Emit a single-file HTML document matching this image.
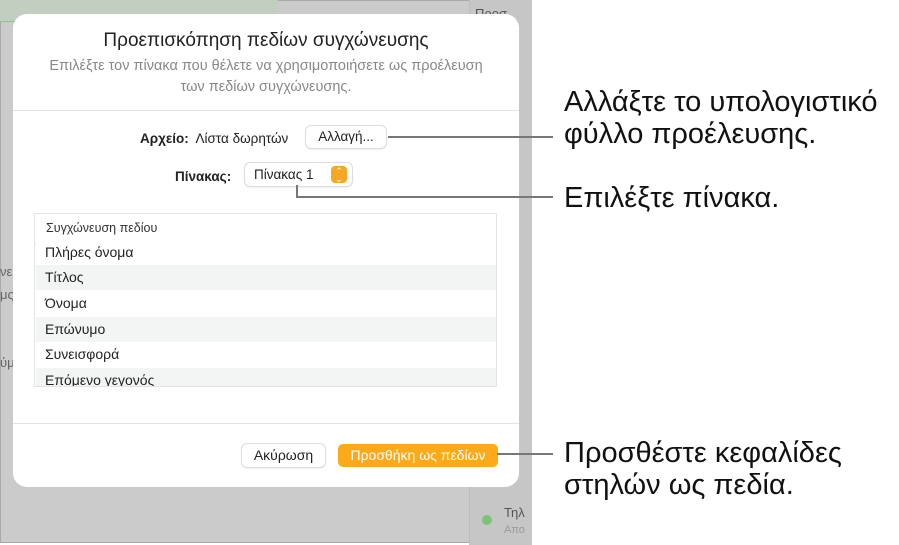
<!DOCTYPE html>
<html><head><meta charset="utf-8"><style>
body{margin:0;width:899px;height:545px;background:#fff;position:relative;overflow:hidden;font-family:"Liberation Sans",sans-serif}
.bg{position:absolute;left:0;top:0;width:530px;height:543px;background:#cbcbcb;border:1px solid #a9a9a9;box-sizing:border-box}
.side{position:absolute;left:469px;top:0;width:62px;height:545px;background:#c6c6c6;border-left:1px solid #bdbdbd}
.dlg{position:absolute;left:13px;top:14px;width:506px;height:473px;background:#fff;border-radius:14px}
.t{position:absolute;font-size:13px;color:#777}
.abs{position:absolute}
.row{position:absolute;left:1px;width:461px;height:25px;font-size:14px;color:#222;line-height:25px;padding-left:9px;box-sizing:border-box}
.line{position:absolute;background:#777;height:2px}
.cap{position:absolute;font-size:29px;color:#111;line-height:32px}
</style></head><body>
<div class="bg"></div>
<div class="abs" style="left:0;top:0;width:278px;height:21px;background:#c2cfc0;border-bottom:1px solid #8fc48a"></div>
<div class="side">
<div class="t" style="left:5px;top:6px;color:#555">Προσ</div>
<div class="t" style="left:5px;top:56px;color:#555">εδ</div>
<div class="t" style="left:5px;top:100px">ευ</div>
<div class="t" style="left:5px;top:168px;color:#999">ιρ</div>
<div class="t" style="left:5px;top:210px;color:#555">τλ</div>
<div class="t" style="left:5px;top:290px;color:#555">νο</div>
<div class="t" style="left:5px;top:345px;color:#555">νε</div>
<div class="t" style="left:5px;top:400px;color:#555">λή</div>
<div class="t" style="left:5px;top:453px;color:#555">πα</div>
<div class="abs" style="left:12px;top:515px;width:10px;height:10px;border-radius:50%;background:#7ac37a"></div>
<div class="t" style="left:34px;top:505px;color:#555">Τηλ</div>
<div class="t" style="left:34px;top:524px;font-size:11px;color:#999">Απο</div>
</div>
<div class="t" style="left:0;top:264px;color:#666">νε</div>
<div class="t" style="left:0;top:287px;color:#666">μς</div>
<div class="t" style="left:0;top:355px;color:#666">ύμ</div>
<div class="dlg">
<div class="abs" style="left:0;width:506px;top:16px;text-align:center;font-size:19px;color:#222">Προεπισκόπηση πεδίων συγχώνευσης</div>
<div class="abs" style="left:0;width:506px;top:42px;text-align:center;font-size:14.5px;color:#888;line-height:21px">Επιλέξτε τον πίνακα που θέλετε να χρησιμοποιήσετε ως προέλευση<br>των πεδίων συγχώνευσης.</div>
<div class="abs" style="left:0;top:96px;width:506px;height:1px;background:#e3e3e3"></div>
<div class="abs" style="left:127px;top:117px;font-size:13.5px;color:#222"><b>Αρχείο:</b>&nbsp; Λίστα δωρητών</div>
<div class="abs" style="left:293px;top:112px;width:80px;height:22px;border-radius:5px;box-shadow:0 0 0 1px #ddd,0 1px 2px rgba(0,0,0,.15);font-size:13.5px;line-height:22px;text-align:center;color:#222">Αλλαγή...</div>
<div class="abs" style="left:162px;top:155px;font-size:13.5px;color:#222;font-weight:bold">Πίνακας:</div>
<div class="abs" style="left:232px;top:149px;width:107px;height:23px;border-radius:5px;box-shadow:0 0 0 1px #ddd,0 1px 2px rgba(0,0,0,.15);font-size:13.5px;line-height:23px;color:#222;padding-left:9px;box-sizing:border-box">Πίνακας 1
<div class="abs" style="left:86px;top:3px;width:16px;height:17px;border-radius:4px;background:#f7a823;color:#fff;font-size:9px;line-height:8px;text-align:center;padding-top:1px;box-sizing:border-box">⌃<br>⌄</div></div>
<div class="abs" style="left:21px;top:199px;width:463px;height:174px;border:1px solid #e3e3e3;box-sizing:border-box;overflow:hidden">
<div class="abs" style="left:11px;top:7px;font-size:12.5px;color:#333">Συγχώνευση πεδίου</div>
<div class="abs" style="left:0;top:29px;width:463px;height:1px;background:#e3e3e3"></div>
<div class="row" style="top:26px;background:#fff">Πλήρες όνομα</div>
<div class="row" style="top:51px;background:#f3f4f4">Τίτλος</div>
<div class="row" style="top:77px;background:#fff">Όνομα</div>
<div class="row" style="top:103px;background:#f3f4f4">Επώνυμο</div>
<div class="row" style="top:128px;background:#fff">Συνεισφορά</div>
<div class="row" style="top:154px;background:#f3f4f4">Επόμενο γεγονός</div>
</div>
<div class="abs" style="left:0;top:409px;width:506px;height:1px;background:#e3e3e3"></div>
<div class="abs" style="left:229px;top:430px;width:83px;height:23px;border-radius:5px;box-shadow:0 0 0 1px #ddd,0 1px 2px rgba(0,0,0,.15);font-size:14px;line-height:23px;text-align:center;color:#222">Ακύρωση</div>
<div class="abs" style="left:325px;top:430px;width:160px;height:23px;border-radius:5px;background:#fdaa1a;font-size:14px;line-height:23px;text-align:center;color:#fff">Προσθήκη ως πεδίων</div>
</div>
<div class="line" style="left:388px;top:136px;width:165px"></div>
<div class="line" style="left:296px;top:196px;width:257px"></div>
<div class="line" style="left:296px;top:185px;width:2px;height:12px"></div>
<div class="line" style="left:497px;top:453px;width:56px"></div>
<div class="cap" style="left:564px;top:86px">Αλλάξτε το υπολογιστικό<br>φύλλο προέλευσης.</div>
<div class="cap" style="left:564px;top:182px">Επιλέξτε πίνακα.</div>
<div class="cap" style="left:564px;top:437px">Προσθέστε κεφαλίδες<br>στηλών ως πεδία.</div>
</body></html>
